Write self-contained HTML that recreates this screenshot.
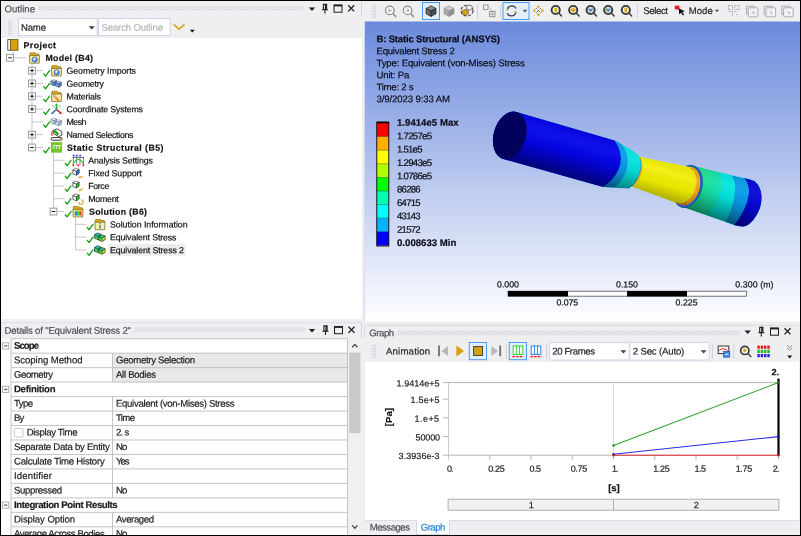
<!DOCTYPE html>
<html lang="en"><head><meta charset="utf-8"><title>Mechanical - Equivalent Stress 2</title>
<style>
html,body{margin:0;padding:0;background:#000;}
#app{position:relative;width:801px;height:536px;overflow:hidden;background:#efeff2;font-family:"Liberation Sans",sans-serif;}
#app div{position:absolute;box-sizing:border-box;}
#app{filter:blur(0.3px);}
#gfx{position:absolute;left:0;top:0;}
.t{position:absolute;white-space:nowrap;line-height:1;-webkit-text-stroke:0.18px currentColor;}
</style></head><body>
<div id="app">
<div style="left:1px;top:37.8px;width:360.5px;height:281.5px;background:#fff;"></div>
<div style="left:1px;top:338.7px;width:347px;height:197px;background:#fff;"></div>
<div style="left:365px;top:362.3px;width:434px;height:158.4px;background:#fff;"></div>
<div style="left:365px;top:520.3px;width:434px;height:14.5px;background:#efeff2;border-top:1px solid #dcdce6;"></div>
<div style="left:416px;top:519.5px;width:34.2px;height:15.2px;background:#fff;border:1px solid #d6d6e2;border-top:none;"></div>
<svg id="gfx" width="801" height="536" viewBox="0 0 801 536">
<defs>
<pattern id="grip" x="0" y="0" width="3.2" height="3.2" patternUnits="userSpaceOnUse">
<rect x="0" y="0" width="1.1" height="1.1" fill="#b9b9c6"/><rect x="1.6" y="1.6" width="1.1" height="1.1" fill="#b9b9c6"/>
</pattern>
<linearGradient id="sky" x1="0" y1="0" x2="0" y2="1">
<stop offset="0" stop-color="#6b8adc"/><stop offset="1" stop-color="#ffffff"/>
</linearGradient>
</defs>
<path d="M361.5 2V16.5M361.5 323V338" stroke="#d4d4de" stroke-width="1" fill="none"/>
<path d="M1 322.6H361.5" stroke="#dfdfe8" stroke-width="1" fill="none"/>
<path d="M364.7 338V325.4H799" stroke="#d9d9e4" stroke-width="1" fill="none"/>
<g transform="translate(39 5.8)"><rect x="0" y="0" width="265" height="4.4" fill="url(#grip)"/></g>
<path d="M308.8 7.6000000000000005h6.4l-3.2 3.4z" fill="#1e1e1e"/>
<path d="M323.4 4.4h3.2v5.2h-3.2zM322 9.8h6M325 9.8v3.6" fill="none" stroke="#1e1e1e" stroke-width="1.1"/><path d="M325.6 4.4v5.2" stroke="#1e1e1e" stroke-width="1.4"/>
<rect x="334" y="5.0" width="8" height="7.2" fill="none" stroke="#1e1e1e" stroke-width="1"/><path d="M334 5.6000000000000005h8" stroke="#1e1e1e" stroke-width="1.6"/>
<path d="M348.2 5.2l6 6.2M354.2 5.2l-6 6.2" stroke="#1e1e1e" stroke-width="1.3" fill="none"/>
<g transform="translate(7.9 20.3)"><rect x="0" y="0" width="4.4" height="14.6" fill="url(#grip)"/></g>
<rect x="18.5" y="18.5" width="78.5" height="17" fill="#fff" stroke="#d3d5e6" stroke-width="1" />
<path d="M88.6 26.2h6.2l-3.1 3.3z" fill="#444"/>
<rect x="98.5" y="18.5" width="71.5" height="17" fill="#fff" stroke="#d3d5e6" stroke-width="1" />
<path d="M174.2 24.8l4.9 4.3l4.9-4.3" fill="none" stroke="#d6a41c" stroke-width="1.7" stroke-linecap="round" stroke-linejoin="round"/>
<path d="M189.8 29.8h5l-2.5 2.8z" fill="#111"/>
<g transform="translate(135 327.6)"><rect x="0" y="0" width="170" height="4.4" fill="url(#grip)"/></g>
<path d="M308.8 329.09999999999997h6.4l-3.2 3.4z" fill="#1e1e1e"/>
<path d="M323.9 325.9h3.2v5.2h-3.2zM322.5 331.29999999999995h6M325.5 331.29999999999995v3.6" fill="none" stroke="#1e1e1e" stroke-width="1.1"/><path d="M326.1 325.9v5.2" stroke="#1e1e1e" stroke-width="1.4"/>
<rect x="334.5" y="326.5" width="8" height="7.2" fill="none" stroke="#1e1e1e" stroke-width="1"/><path d="M334.5 327.09999999999997h8" stroke="#1e1e1e" stroke-width="1.6"/>
<path d="M348.5 326.7l6 6.2M354.5 326.7l-6 6.2" stroke="#1e1e1e" stroke-width="1.3" fill="none"/>
<g transform="translate(398 330.7)"><rect x="0" y="0" width="342" height="4.4" fill="url(#grip)"/></g>
<path d="M744.5 330.59999999999997h6.4l-3.2 3.4z" fill="#1e1e1e"/>
<path d="M759.6999999999999 327.4h3.2v5.2h-3.2zM758.3 332.79999999999995h6M761.3 332.79999999999995v3.6" fill="none" stroke="#1e1e1e" stroke-width="1.1"/><path d="M761.9 327.4v5.2" stroke="#1e1e1e" stroke-width="1.4"/>
<rect x="770.5" y="328.0" width="8" height="7.2" fill="none" stroke="#1e1e1e" stroke-width="1"/><path d="M770.5 328.59999999999997h8" stroke="#1e1e1e" stroke-width="1.6"/>
<path d="M784.5 328.2l6 6.2M790.5 328.2l-6 6.2" stroke="#1e1e1e" stroke-width="1.3" fill="none"/>
<defs><linearGradient id="rb" x1="0" y1="0" x2="1" y2="1"><stop offset="0" stop-color="#2a52e8"/><stop offset="0.3" stop-color="#18c8d8"/><stop offset="0.5" stop-color="#30d030"/><stop offset="0.72" stop-color="#f0e020"/><stop offset="1" stop-color="#f03018"/></linearGradient></defs>
<rect x="108.6" y="244.16" width="77" height="11.6" fill="#ececec" />
<path d="M13 51.0V57.81M13.5 57.81H26" fill="none" stroke="#bcbcbc" stroke-width="0.85"/>
<path d="M32 63.81V147.48000000000002" fill="none" stroke="#bcbcbc" stroke-width="0.85"/>
<path d="M35.6 70.62H43" fill="none" stroke="#bcbcbc" stroke-width="0.85"/>
<path d="M35.6 83.43H43" fill="none" stroke="#bcbcbc" stroke-width="0.85"/>
<path d="M35.6 96.24000000000001H43" fill="none" stroke="#bcbcbc" stroke-width="0.85"/>
<path d="M35.6 109.05H43" fill="none" stroke="#bcbcbc" stroke-width="0.85"/>
<path d="M32 121.86H43" fill="none" stroke="#bcbcbc" stroke-width="0.85"/>
<path d="M35.6 134.67000000000002H43" fill="none" stroke="#bcbcbc" stroke-width="0.85"/>
<path d="M35.6 147.48000000000002H43" fill="none" stroke="#bcbcbc" stroke-width="0.85"/>
<path d="M53.5 153.48000000000002V211.53" fill="none" stroke="#bcbcbc" stroke-width="0.85"/>
<path d="M53.5 160.29000000000002H64.5" fill="none" stroke="#bcbcbc" stroke-width="0.85"/>
<path d="M53.5 173.1H64.5" fill="none" stroke="#bcbcbc" stroke-width="0.85"/>
<path d="M53.5 185.91H64.5" fill="none" stroke="#bcbcbc" stroke-width="0.85"/>
<path d="M53.5 198.72H64.5" fill="none" stroke="#bcbcbc" stroke-width="0.85"/>
<path d="M57.2 211.53H64.5" fill="none" stroke="#bcbcbc" stroke-width="0.85"/>
<path d="M75.6 217.53V249.96" fill="none" stroke="#bcbcbc" stroke-width="0.85"/>
<path d="M75.6 224.34H86.5" fill="none" stroke="#bcbcbc" stroke-width="0.85"/>
<path d="M75.6 237.15H86.5" fill="none" stroke="#bcbcbc" stroke-width="0.85"/>
<path d="M75.6 249.96H86.5" fill="none" stroke="#bcbcbc" stroke-width="0.85"/>
<rect x="7.8" y="39.6" width="3" height="10.6" fill="#fff" stroke="#333" stroke-width="0.8"/>
<rect x="10.6" y="39.6" width="7.4" height="10.6" fill="#d9a012" stroke="#6b5208" stroke-width="0.8"/>
<path d="M29.900000000000002 52.81h5.4l1 1.2h2.6v2.6h-9z" fill="#dba81e" stroke="#8a6a14" stroke-width="0.6"/>
<path d="M29.3 55.61h10.4l-.5 7.6h-9.4z" fill="#f4eca6" stroke="#6a5a1a" stroke-width="0.7" stroke-linejoin="round"/>
<circle cx="34.7" cy="59.61" r="2.7" fill="#5a8ee0" stroke="#2a4a96" stroke-width="0.6"/><path d="M33.1 58.410000000000004q1.4-1.6 2.8-.4q.2 1.2-1 1.6q-.2 1.4-1.4 1.2z" fill="#e4eeff"/>
<rect x="6.6" y="54.410000000000004" width="6.8" height="6.8" fill="#fff" stroke="#8e8e8e" stroke-width="0.9"/>
<path d="M8.1 57.81h3.8" stroke="#111" stroke-width="0.95"/>
<path d="M43.8 73.82000000000001l1.8 2.2l3.9-5.4" fill="none" stroke="#12a012" stroke-width="1.3" stroke-linecap="round" stroke-linejoin="round"/>
<path d="M51.9 65.62h5.4l1 1.2h2.6v2.6h-9z" fill="#dba81e" stroke="#8a6a14" stroke-width="0.6"/>
<path d="M51.3 68.42000000000002h10.4l-.5 7.6h-9.4z" fill="#f4eca6" stroke="#6a5a1a" stroke-width="0.7" stroke-linejoin="round"/>
<circle cx="56.7" cy="72.42" r="2.7" fill="#5a8ee0" stroke="#2a4a96" stroke-width="0.6"/><path d="M55.1 71.22q1.4-1.6 2.8-.4q.2 1.2-1 1.6q-.2 1.4-1.4 1.2z" fill="#e4eeff"/>
<rect x="28.6" y="67.22" width="6.8" height="6.8" fill="#fff" stroke="#8e8e8e" stroke-width="0.9"/>
<path d="M30.1 70.62h3.8" stroke="#111" stroke-width="0.95"/>
<path d="M32 68.72v3.8" stroke="#111" stroke-width="0.95"/>
<path d="M43.8 86.63000000000001l1.8 2.2l3.9-5.4" fill="none" stroke="#12a012" stroke-width="1.3" stroke-linecap="round" stroke-linejoin="round"/>
<path d="M50.9 81.23l2.6-1.5l3.2 1l-2.6 1.6z" fill="#b8d4f8" stroke="#2a3a5a" stroke-width="0.5"/><path d="M50.9 81.23l3.2 1.1v3.4l-3.2-1.2z" fill="#6aa6ec" stroke="#2a3a5a" stroke-width="0.5"/><path d="M54.1 82.33000000000001l2.6-1.6v3.3l-2.6 1.7z" fill="#4a88da" stroke="#2a3a5a" stroke-width="0.5"/>
<path d="M55.7 82.83l2.6-1.5l3.2 1l-2.6 1.6z" fill="#b8d4f8" stroke="#2a3a5a" stroke-width="0.5"/><path d="M55.7 82.83l3.2 1.1v3.4l-3.2-1.2z" fill="#6aa6ec" stroke="#2a3a5a" stroke-width="0.5"/><path d="M58.900000000000006 83.93l2.6-1.6v3.3l-2.6 1.7z" fill="#4a88da" stroke="#2a3a5a" stroke-width="0.5"/>
<rect x="28.6" y="80.03" width="6.8" height="6.8" fill="#fff" stroke="#8e8e8e" stroke-width="0.9"/>
<path d="M30.1 83.43h3.8" stroke="#111" stroke-width="0.95"/>
<path d="M32 81.53v3.8" stroke="#111" stroke-width="0.95"/>
<path d="M43.8 99.44000000000001l1.8 2.2l3.9-5.4" fill="none" stroke="#12a012" stroke-width="1.3" stroke-linecap="round" stroke-linejoin="round"/>
<path d="M51.9 91.24000000000001h5.4l1 1.2h2.6v2.6h-9z" fill="#dba81e" stroke="#8a6a14" stroke-width="0.6"/>
<path d="M51.3 94.04000000000002h10.4l-.5 7.6h-9.4z" fill="#f4eca6" stroke="#6a5a1a" stroke-width="0.7" stroke-linejoin="round"/>
<path d="M54.3 96.04l4.2 4.4" stroke="#e8873a" stroke-width="2.2" stroke-linecap="round"/><path d="M53.9 95.64000000000001l1.6 1.6" stroke="#b9b9b9" stroke-width="1.6" stroke-linecap="round"/>
<rect x="28.6" y="92.84" width="6.8" height="6.8" fill="#fff" stroke="#8e8e8e" stroke-width="0.9"/>
<path d="M30.1 96.24000000000001h3.8" stroke="#111" stroke-width="0.95"/>
<path d="M32 94.34v3.8" stroke="#111" stroke-width="0.95"/>
<path d="M43.8 112.25l1.8 2.2l3.9-5.4" fill="none" stroke="#12a012" stroke-width="1.3" stroke-linecap="round" stroke-linejoin="round"/>
<path d="M56.5 109.64999999999999v-5" stroke="#1db81d" stroke-width="1.3"/><path d="M54.8 105.64999999999999l1.7-2.4l1.7 2.4z" fill="#1db81d"/>
<path d="M56.5 109.64999999999999l4.2 3.4" stroke="#e01818" stroke-width="1.3"/><path d="M62.1 114.25l-3-.6l1.7-2.1z" fill="#e01818"/>
<path d="M56.5 109.64999999999999l-4.2 3.4" stroke="#3a7be0" stroke-width="1.3"/><path d="M50.9 114.25l3-.6l-1.7-2.1z" fill="#3a7be0"/>
<path d="M52.1 105.45l8.8 7M60.9 105.45l-8.8 7" stroke="#555" stroke-width="0.5"/>
<rect x="28.6" y="105.64999999999999" width="6.8" height="6.8" fill="#fff" stroke="#8e8e8e" stroke-width="0.9"/>
<path d="M30.1 109.05h3.8" stroke="#111" stroke-width="0.95"/>
<path d="M32 107.14999999999999v3.8" stroke="#111" stroke-width="0.95"/>
<path d="M43.8 125.06l1.8 2.2l3.9-5.4" fill="none" stroke="#12a012" stroke-width="1.3" stroke-linecap="round" stroke-linejoin="round"/>
<path d="M50.9 119.66l2.6-1.5l3.2 1l-2.6 1.6z" fill="#eef4fb" stroke="#4f6480" stroke-width="0.5"/><path d="M50.9 119.66l3.2 1.1v3.4l-3.2-1.2z" fill="#dbe7f4" stroke="#4f6480" stroke-width="0.5"/><path d="M54.1 120.76l2.6-1.6v3.3l-2.6 1.7z" fill="#b5c7dd" stroke="#4f6480" stroke-width="0.5"/>
<path d="M55.7 121.25999999999999l2.6-1.5l3.2 1l-2.6 1.6z" fill="#eef4fb" stroke="#4f6480" stroke-width="0.5"/><path d="M55.7 121.25999999999999l3.2 1.1v3.4l-3.2-1.2z" fill="#dbe7f4" stroke="#4f6480" stroke-width="0.5"/><path d="M58.900000000000006 122.36l2.6-1.6v3.3l-2.6 1.7z" fill="#b5c7dd" stroke="#4f6480" stroke-width="0.5"/>
<path d="M52.1 135.87q-1.3-3.6 1.8-5.6" fill="none" stroke="#f03434" stroke-width="1.3"/>
<path d="M53.7 130.37l3.4-1.5l4.7 2.7v3.6l-3.2 1.5l-4.9-3z" fill="#fdfdfd" stroke="#222" stroke-width="0.8"/>
<path d="M54.4 130.57000000000002l3.9 4.1" stroke="#18b018" stroke-width="2.4"/>
<rect x="51.2" y="137.57000000000002" width="10.8" height="2.6" rx="0.9" fill="#fff" stroke="#222" stroke-width="0.9"/><rect x="59.4" y="138.17000000000002" width="1.5" height="1.4" fill="#e0b020"/>
<rect x="28.6" y="131.27" width="6.8" height="6.8" fill="#fff" stroke="#8e8e8e" stroke-width="0.9"/>
<path d="M30.1 134.67000000000002h3.8" stroke="#111" stroke-width="0.95"/>
<path d="M32 132.77v3.8" stroke="#111" stroke-width="0.95"/>
<path d="M43.8 150.68l1.8 2.2l3.9-5.4" fill="none" stroke="#12a012" stroke-width="1.3" stroke-linecap="round" stroke-linejoin="round"/>
<rect x="51.0" y="142.18" width="11.1" height="10.5" fill="#78c22a"/>
<text x="56.6" y="149.18" text-anchor="middle" font-family="Liberation Sans,sans-serif" font-size="4.7" font-weight="700" font-style="italic" fill="#fff" letter-spacing="-0.2">TTT</text>
<rect x="28.6" y="144.08" width="6.8" height="6.8" fill="#fff" stroke="#8e8e8e" stroke-width="0.9"/>
<path d="M30.1 147.48000000000002h3.8" stroke="#111" stroke-width="0.95"/>
<path d="M65.30000000000001 163.49l1.8 2.2l3.9-5.4" fill="none" stroke="#12a012" stroke-width="1.3" stroke-linecap="round" stroke-linejoin="round"/>
<path d="M73.3 156.69000000000003v8M76.7 156.69000000000003v8M80.0 156.69000000000003v8M83.39999999999999 156.69000000000003v8M72.7 157.49h11.2" stroke="#333" stroke-width="0.65" fill="none"/>
<path d="M73.3 163.49q5-8 10.1 0" fill="none" stroke="#22c422" stroke-width="1.2"/>
<rect x="72.69999999999999" y="154.69000000000003" width="1.9" height="1.7" fill="#2a4be0"/>
<rect x="75.8" y="154.69000000000003" width="1.9" height="1.7" fill="#2a4be0"/>
<rect x="79.19999999999999" y="154.69000000000003" width="1.9" height="1.7" fill="#2a4be0"/>
<circle cx="73.3" cy="165.19000000000003" r="1" fill="#ee1c1c"/>
<circle cx="78.3" cy="165.19000000000003" r="1" fill="#ee1c1c"/>
<circle cx="83.39999999999999" cy="165.19000000000003" r="1" fill="#ee1c1c"/>
<path d="M65.30000000000001 176.29999999999998l1.8 2.2l3.9-5.4" fill="none" stroke="#12a012" stroke-width="1.3" stroke-linecap="round" stroke-linejoin="round"/>
<path d="M72.8 170.0l2.7-1.7l3.7 1.2l-2.7 1.8z" fill="#fafafa" stroke="#222" stroke-width="0.6"/><path d="M72.8 170.0l3.7 1.3v3.9l-3.7-1.4z" fill="#f0f0f0" stroke="#222" stroke-width="0.6"/><path d="M76.5 171.3l2.7-1.8v3.7l-2.7 2z" fill="#1e7be6" stroke="#222" stroke-width="0.6"/>
<path d="M78.2 178.1l2.4-2M80.4 178.1l2.4-2" stroke="#d6a41c" stroke-width="1.1"/>
<path d="M65.30000000000001 189.10999999999999l1.8 2.2l3.9-5.4" fill="none" stroke="#12a012" stroke-width="1.3" stroke-linecap="round" stroke-linejoin="round"/>
<path d="M72.8 182.81l2.7-1.7l3.7 1.2l-2.7 1.8z" fill="#fafafa" stroke="#222" stroke-width="0.6"/><path d="M72.8 182.81l3.7 1.3v3.9l-3.7-1.4z" fill="#f0f0f0" stroke="#222" stroke-width="0.6"/><path d="M76.5 184.11l2.7-1.8v3.7l-2.7 2z" fill="#1fd01f" stroke="#222" stroke-width="0.6"/>
<path d="M79.4 190.71l3.4-2.2" stroke="#d6a41c" stroke-width="1.1"/><path d="M78.4 191.31l2.4-.2l-1.2-1.8z" fill="#d6a41c"/>
<path d="M65.30000000000001 201.92l1.8 2.2l3.9-5.4" fill="none" stroke="#12a012" stroke-width="1.3" stroke-linecap="round" stroke-linejoin="round"/>
<path d="M72.8 195.62l2.7-1.7l3.7 1.2l-2.7 1.8z" fill="#fafafa" stroke="#222" stroke-width="0.6"/><path d="M72.8 195.62l3.7 1.3v3.9l-3.7-1.4z" fill="#f0f0f0" stroke="#222" stroke-width="0.6"/><path d="M76.5 196.92000000000002l2.7-1.8v3.7l-2.7 2z" fill="#1fd01f" stroke="#222" stroke-width="0.6"/>
<path d="M78.8 201.92a2.2 2.2 0 1 0 2.2-2.1" fill="none" stroke="#d6a41c" stroke-width="1.1"/>
<path d="M65.30000000000001 214.73l1.8 2.2l3.9-5.4" fill="none" stroke="#12a012" stroke-width="1.3" stroke-linecap="round" stroke-linejoin="round"/>
<path d="M73.39999999999999 206.53h5.4l1 1.2h2.6v2.6h-9z" fill="#dba81e" stroke="#8a6a14" stroke-width="0.6"/>
<path d="M72.8 209.33h10.4l-.5 7.6h-9.4z" fill="#f4eca6" stroke="#6a5a1a" stroke-width="0.7" stroke-linejoin="round"/>
<rect x="74.8" y="211.13" width="2.4" height="4.4" fill="#2a7be0"/><rect x="77.2" y="211.13" width="2.2" height="4.4" fill="#2ad02a"/><rect x="79.4" y="211.13" width="2.2" height="4.4" fill="#e8422a"/><path d="M74.8 211.13l1.2-1.2h6.8l-1.2 1.2z" fill="#f0d020"/>
<rect x="50.1" y="208.13" width="6.8" height="6.8" fill="#fff" stroke="#8e8e8e" stroke-width="0.9"/>
<path d="M51.6 211.53h3.8" stroke="#111" stroke-width="0.95"/>
<path d="M87.30000000000001 227.54l1.8 2.2l3.9-5.4" fill="none" stroke="#12a012" stroke-width="1.3" stroke-linecap="round" stroke-linejoin="round"/>
<path d="M95.39999999999999 219.34h5.4l1 1.2h2.6v2.6h-9z" fill="#dba81e" stroke="#8a6a14" stroke-width="0.6"/>
<path d="M94.8 222.14000000000001h10.4l-.5 7.6h-9.4z" fill="#f8f0a8" stroke="#6a5a1a" stroke-width="0.7" stroke-linejoin="round"/>
<rect x="99.4" y="225.14000000000001" width="1.3" height="3.4" fill="#2a6ad8"/><rect x="99.4" y="223.14000000000001" width="1.3" height="1.2" fill="#2a6ad8"/>
<path d="M87.30000000000001 240.35l1.8 2.2l3.9-5.4" fill="none" stroke="#12a012" stroke-width="1.3" stroke-linecap="round" stroke-linejoin="round"/>
<path d="M94.39999999999999 234.75l3-1.8l3.6 1.2v3.6l-3 1.9l-3.6-1.3z" fill="url(#rb)" stroke="#1c1c1c" stroke-width="0.6" stroke-linejoin="round"/><path d="M94.39999999999999 234.75l3.6 1.3l3-1.9M98.0 236.05v3.6" fill="none" stroke="#1c1c1c" stroke-width="0.45"/>
<path d="M98.6 236.55l3-1.8l3.6 1.2v3.6l-3 1.9l-3.6-1.3z" fill="url(#rb)" stroke="#1c1c1c" stroke-width="0.6" stroke-linejoin="round"/><path d="M98.6 236.55l3.6 1.3l3-1.9M102.2 237.85000000000002v3.6" fill="none" stroke="#1c1c1c" stroke-width="0.45"/>
<path d="M87.30000000000001 253.16l1.8 2.2l3.9-5.4" fill="none" stroke="#12a012" stroke-width="1.3" stroke-linecap="round" stroke-linejoin="round"/>
<path d="M94.39999999999999 247.56l3-1.8l3.6 1.2v3.6l-3 1.9l-3.6-1.3z" fill="url(#rb)" stroke="#1c1c1c" stroke-width="0.6" stroke-linejoin="round"/><path d="M94.39999999999999 247.56l3.6 1.3l3-1.9M98.0 248.86v3.6" fill="none" stroke="#1c1c1c" stroke-width="0.45"/>
<path d="M98.6 249.36l3-1.8l3.6 1.2v3.6l-3 1.9l-3.6-1.3z" fill="url(#rb)" stroke="#1c1c1c" stroke-width="0.6" stroke-linejoin="round"/><path d="M98.6 249.36l3.6 1.3l3-1.9M102.2 250.66000000000003v3.6" fill="none" stroke="#1c1c1c" stroke-width="0.45"/>
<g transform="translate(372 4.4)"><rect x="0" y="0" width="4.4" height="13.8" fill="url(#grip)"/></g>
<path d="M393.1 13.7l2.6 2.7" stroke="#8c8c8c" stroke-width="1.5" stroke-linecap="round"/><circle cx="389.8" cy="10.4" r="4.3" fill="#f4f4f6" stroke="#8c8c8c" stroke-width="1.2"/>
<path d="M391.6 10.4h-3.4M390.0 8.9l-1.8 1.5l1.8 1.5" fill="none" stroke="#9a9a9a" stroke-width="0.8"/>
<path d="M410.90000000000003 13.7l2.6 2.7" stroke="#8c8c8c" stroke-width="1.5" stroke-linecap="round"/><circle cx="407.6" cy="10.4" r="4.3" fill="#f4f4f6" stroke="#8c8c8c" stroke-width="1.2"/>
<path d="M405.8 10.4h3.4M407.40000000000003 8.9l1.8 1.5l-1.8 1.5" fill="none" stroke="#9a9a9a" stroke-width="0.8"/>
<rect x="422.5" y="2.5" width="17" height="17" fill="#e3eefb" stroke="#4a9cf0" stroke-width="1" />
<path d="M426 8.4l5-2.6l5 2.6l-5 2.6z" fill="#8c8c8c" stroke="#222" stroke-width="0.7"/><path d="M426 8.4l5 2.6v5.4l-5-2.6z" fill="#6a6a6a" stroke="#222" stroke-width="0.7"/><path d="M431 11.0l5-2.6v5.4l-5 2.6z" fill="#4c4c4c" stroke="#222" stroke-width="0.7"/>
<path d="M444 8.4l5-2.6l5 2.6l-5 2.6z" fill="#c8c8c8" stroke="#9a9a9a" stroke-width="0.7"/><path d="M444 8.4l5 2.6v5.4l-5-2.6z" fill="#a8a8a8" stroke="#9a9a9a" stroke-width="0.7"/><path d="M449 11.0l5-2.6v5.4l-5 2.6z" fill="#8e8e8e" stroke="#9a9a9a" stroke-width="0.7"/>
<ellipse cx="467" cy="10.6" rx="6" ry="5.4" fill="none" stroke="#444" stroke-width="1.1" stroke-dasharray="3 1.6"/>
<path d="M462 11l3-1.6l3.4 1.4v3l-3 1.6l-3.4-1.4z" fill="#d6a41c" stroke="#5a4408" stroke-width="0.6"/>
<path d="M466.6 6.4l2.6-1.4l3 1.2v2.6l-2.6 1.4l-3-1.2z" fill="#f4f4f4" stroke="#333" stroke-width="0.6"/>
<path d="M477.5 4V18.5" stroke="#d0d0da" stroke-width="1"/>
<rect x="483.6" y="5" width="4.4" height="4.4" fill="#f4f4f4" stroke="#8a8a8a" stroke-width="0.9"/><path d="M489.4 7.6l2.6 3" stroke="#9a9a9a" stroke-width="0.8"/><rect x="489.6" y="11.4" width="5.4" height="5.4" fill="#f4f4f4" stroke="#8a8a8a" stroke-width="0.9"/><path d="M489.6 14.1h5.4M492.3 11.4v5.4" stroke="#8a8a8a" stroke-width="0.7"/>
<path d="M500.8 4V18.5" stroke="#d0d0da" stroke-width="1"/>
<rect x="503" y="2.5" width="26" height="17" fill="#e3eefb" stroke="#4a9cf0" stroke-width="1" />
<path d="M507.4 9.2a4.6 4.6 0 0 1 8.6-.6" fill="none" stroke="#3a3a3a" stroke-width="1.3"/><path d="M515.8 12.6a4.6 4.6 0 0 1-8.6 .6" fill="none" stroke="#3a3a3a" stroke-width="1.3"/>
<path d="M506 10.6l2.9-.4l-1.7-2.3z" fill="#d6a41c"/><path d="M517.2 11.2l-2.9 .4l1.7 2.3z" fill="#d6a41c"/>
<path d="M522.6 9.8h4.8l-2.4 2.6z" fill="#555"/>
<path d="M544.0 10.6L541.5 12.7L541.5 8.5z" fill="#d6a41c"/>
<path d="M532.8 10.6L535.3 8.5L535.3 12.7z" fill="#d6a41c"/>
<path d="M538.4 16.2L536.3 13.7L540.5 13.7z" fill="#d6a41c"/>
<path d="M538.4 5.0L540.5 7.5L536.3 7.5z" fill="#d6a41c"/>
<rect x="535.9" y="8.1" width="5" height="5" fill="#fff"/><path d="M536 8.2l4.8 4.8M540.8 8.2l-4.8 4.8" stroke="#222" stroke-width="0.9" stroke-dasharray="1.1 0.9"/>
<path d="M559.0 13.3l2.6 2.7" stroke="#3a3a3a" stroke-width="1.5" stroke-linecap="round"/><circle cx="555.7" cy="10" r="4.1" fill="#f0f0f0" stroke="#3a3a3a" stroke-width="1.9"/>
<rect x="554.3000000000001" y="7.4" width="2.8" height="5.2" rx="1.2" fill="#e0b020"/>
<path d="M576.5 13.3l2.6 2.7" stroke="#3a3a3a" stroke-width="1.5" stroke-linecap="round"/><circle cx="573.2" cy="10" r="4.1" fill="#f0f0f0" stroke="#3a3a3a" stroke-width="1.9"/>
<path d="M570.7 10h5M573.2 7.5v5" stroke="#e0a818" stroke-width="1.9"/>
<path d="M593.9 13.3l2.6 2.7" stroke="#3a3a3a" stroke-width="1.5" stroke-linecap="round"/><circle cx="590.6" cy="10" r="4.1" fill="#cfcfcf" stroke="#3a3a3a" stroke-width="1.9"/>
<path d="M588.0 8.2l2.6 3.9l2.6-3.9l-2.6 1.3z" fill="#2f6fcf"/>
<path d="M611.5 13.3l2.6 2.7" stroke="#3a3a3a" stroke-width="1.5" stroke-linecap="round"/><circle cx="608.2" cy="10" r="4.1" fill="#cfcfcf" stroke="#3a3a3a" stroke-width="1.9"/>
<path d="M605.6 8.2l2.6 3.9v-2.6z" fill="#1aa01a"/><path d="M610.8000000000001 8.2l-2.6 3.9v-2.6z" fill="#2f6fcf"/>
<path d="M629.0999999999999 13.3l2.6 2.7" stroke="#3a3a3a" stroke-width="1.5" stroke-linecap="round"/><circle cx="625.8" cy="10" r="4.1" fill="#f0f0f0" stroke="#3a3a3a" stroke-width="1.9"/>
<rect x="624.4" y="7.4" width="2.8" height="5.2" rx="1.2" fill="#e0b020"/>
<path d="M637.4 4V18.5" stroke="#d0d0da" stroke-width="1"/>
<rect x="674.8" y="5.6" width="4.6" height="3.8" fill="#f0141e"/>
<path d="M678.6 8.2l6.4 3l-2.6 .7l1.8 2.9l-1.3 .8l-1.8-2.9l-1.9 1.9z" fill="#111"/>
<path d="M714.8 9.8h4.4l-2.2 2.4z" fill="#555"/>
<path d="M728.5 5.5h4v4h-4zM734.5 5.5h4.5v4h-4.5zM728.5 11.5h4v4.5M734.5 11.5h3M736 14l2.6 2.4" fill="none" stroke="#a4a4ac" stroke-width="0.9" stroke-dasharray="1.6 0.8"/>
<path d="M746.5 6.2h8.4v2.4" fill="none" stroke="#a4a4ac" stroke-width="0.9"/><rect x="748.3" y="7.8" width="9.6" height="9" rx="1" fill="#f2f2f6" stroke="#a4a4ac" stroke-width="0.9"/><path d="M746.5 6.2v8h1.8" fill="none" stroke="#a4a4ac" stroke-width="0.9"/><path d="M751.9 11.4l2.4 1.2l-1 .4l.8 1.4" fill="none" stroke="#a4a4ac" stroke-width="0.8"/>
<path d="M764.2 6.2h8.4v2.4" fill="none" stroke="#a4a4ac" stroke-width="0.9"/><rect x="766.0" y="7.8" width="9.6" height="9" rx="1" fill="#f2f2f6" stroke="#a4a4ac" stroke-width="0.9"/><path d="M764.2 6.2v8h1.8" fill="none" stroke="#a4a4ac" stroke-width="0.9"/><path d="M769.6 11.4l2.4 1.2l-1 .4l.8 1.4" fill="none" stroke="#a4a4ac" stroke-width="0.8"/>
<path d="M781.8 6.2h8.4v2.4" fill="none" stroke="#a4a4ac" stroke-width="0.9"/><rect x="783.5999999999999" y="7.8" width="9.6" height="9" rx="1" fill="#f2f2f6" stroke="#a4a4ac" stroke-width="0.9"/><path d="M781.8 6.2v8h1.8" fill="none" stroke="#a4a4ac" stroke-width="0.9"/><path d="M787.1999999999999 11.4l2.4 1.2l-1 .4l.8 1.4" fill="none" stroke="#a4a4ac" stroke-width="0.8"/>
<rect x="364.8" y="21.5" width="435.2" height="300.1" fill="url(#sky)" />
<path d="M364.40000000000003 21.5V321.6" stroke="#cfd4ea" stroke-width="0.8"/>
<rect x="376.8" y="123.0" width="12" height="13.799999999999999" fill="#ff0000" />
<rect x="376.8" y="136.6" width="12" height="13.799999999999999" fill="#ffb000" />
<rect x="376.8" y="150.2" width="12" height="13.799999999999999" fill="#ffff00" />
<rect x="376.8" y="163.8" width="12" height="13.799999999999999" fill="#b2ff00" />
<rect x="376.8" y="177.4" width="12" height="13.799999999999999" fill="#00ff00" />
<rect x="376.8" y="191.0" width="12" height="13.799999999999999" fill="#00ffb2" />
<rect x="376.8" y="204.6" width="12" height="13.799999999999999" fill="#00ffff" />
<rect x="376.8" y="218.2" width="12" height="13.799999999999999" fill="#00b2ff" />
<rect x="376.8" y="231.8" width="12" height="13.799999999999999" fill="#0000ff" />
<rect x="376.8" y="122.4" width="12" height="123.6" fill="none" stroke="#000" stroke-width="0.9"/>
<path d="M376.8 122.4h12" stroke="#000" stroke-width="1.8"/>
<path d="M376.8 136.6h12" stroke="#222" stroke-width="0.5" opacity="0.7"/>
<path d="M376.8 150.2h12" stroke="#222" stroke-width="0.5" opacity="0.7"/>
<path d="M376.8 163.8h12" stroke="#222" stroke-width="0.5" opacity="0.7"/>
<path d="M376.8 177.4h12" stroke="#222" stroke-width="0.5" opacity="0.7"/>
<path d="M376.8 191.0h12" stroke="#222" stroke-width="0.5" opacity="0.7"/>
<path d="M376.8 204.6h12" stroke="#222" stroke-width="0.5" opacity="0.7"/>
<path d="M376.8 218.2h12" stroke="#222" stroke-width="0.5" opacity="0.7"/>
<path d="M376.8 231.8h12" stroke="#222" stroke-width="0.5" opacity="0.7"/>
<rect x="508" y="291.2" width="238.6" height="5" fill="#fff" stroke="#555" stroke-width="0.8" />
<rect x="508" y="291" width="60" height="5.4" fill="#000" />
<rect x="627" y="291" width="60" height="5.4" fill="#000" />
<defs><linearGradient id="shade" gradientUnits="userSpaceOnUse" x1="516.5" y1="111.9" x2="503.1" y2="158.9"><stop offset="0" stop-color="#000" stop-opacity="0.07"/><stop offset="0.25" stop-color="#fff" stop-opacity="0.05"/><stop offset="0.5" stop-color="#000" stop-opacity="0.05"/><stop offset="0.8" stop-color="#000" stop-opacity="0.3"/><stop offset="1" stop-color="#000" stop-opacity="0.5"/></linearGradient></defs>
<defs><linearGradient id="shadeY" gradientUnits="userSpaceOnUse" x1="515.3" y1="116.2" x2="504.3" y2="154.6"><stop offset="0" stop-color="#000" stop-opacity="0.05"/><stop offset="0.3" stop-color="#fff" stop-opacity="0.1"/><stop offset="0.6" stop-color="#000" stop-opacity="0.04"/><stop offset="1" stop-color="#000" stop-opacity="0.3"/></linearGradient></defs>
<clipPath id="clipR"><path d="M690.4 165 L740.3 177.4 Q750 178.8 754.6 181.3 Q760.4 186 761.4 195 Q761.8 203 759.9 208.1 Q757.6 215 753.3 219.9 Q748 226 742.9 226.4 Q738 226.4 735 225.3 L685.4 207.9 A14.3 21.6 16.0 0 1 690.4 165Z"/></clipPath>
<g clip-path="url(#clipR)">
<path d="M690.4 165 L740.3 177.4 Q750 178.8 754.6 181.3 Q760.4 186 761.4 195 Q761.8 203 759.9 208.1 Q757.6 215 753.3 219.9 Q748 226 742.9 226.4 Q738 226.4 735 225.3 L685.4 207.9 A14.3 21.6 16.0 0 1 690.4 165Z" fill="#1fdc86"/>
<defs><linearGradient id="gr1" gradientUnits="userSpaceOnUse" x1="692.4" y1="187.8" x2="723.2" y2="196.6"><stop offset="0" stop-color="#22dd7e"/><stop offset="0.55" stop-color="#16e0a4"/><stop offset="1" stop-color="#0fe4c8"/></linearGradient></defs>
<path d="M690.4 165 L740.3 177.4 Q750 178.8 754.6 181.3 Q760.4 186 761.4 195 Q761.8 203 759.9 208.1 Q757.6 215 753.3 219.9 Q748 226 742.9 226.4 Q738 226.4 735 225.3 L685.4 207.9 A14.3 21.6 16.0 0 1 690.4 165Z" fill="url(#gr1)"/>
<path d="M717.4 168 Q723.5 181 721.3 191.1 Q720.5 198 718 202.9 Q714 209 707 214 L760 240 L780 170 Z" fill="#04e6e0"/>
<path d="M729.2 170 Q736.6 182 734.8 192.4 Q733.6 209 723 226 L760 240 L780 170 Z" fill="#0a9cea"/>
<path d="M740.3 173 Q750.4 183 748.8 193.7 Q746.8 211 731.5 228 L760 240 L780 170 Z" fill="#0606d8"/>
<path d="M690.4 165 L740.3 177.4 Q750 178.8 754.6 181.3 Q760.4 186 761.4 195 Q761.8 203 759.9 208.1 Q757.6 215 753.3 219.9 Q748 226 742.9 226.4 Q738 226.4 735 225.3 L685.4 207.9 A14.3 21.6 16.0 0 1 690.4 165Z" fill="url(#shade)"/>
</g>
<ellipse cx="687.6" cy="186.4" rx="14.3" ry="21.6" transform="rotate(16.0 687.6 186.4)" fill="#1d5fc0" stroke="#1a4aa0" stroke-width="0.6"/>
<clipPath id="clipN"><path d="M629.2 154.4 L693.0 167.6 A12.9 19.6 16.0 0 1 682.2 205.2 L621.1 182.5Z"/></clipPath>
<g clip-path="url(#clipN)"><path d="M629.2 154.4 L693.0 167.6 A12.9 19.6 16.0 0 1 682.2 205.2 L621.1 182.5Z" fill="#f2f000"/>
<path d="M688.6 166.3 A12.9 19.6 16.0 0 1 677.8 204.0" fill="none" stroke="#f3d010" stroke-width="2.6" opacity="0.8"/>
<path d="M691.3 167.1 A12.9 19.6 16.0 0 1 680.5 204.7" fill="none" stroke="#f59c12" stroke-width="3.8" opacity="0.95"/>
<path d="M686.8 203.8 A12.9 19.6 16.0 0 1 676.7 202.6" fill="none" stroke="#ee5a14" stroke-width="1.6" opacity="0.8"/>
<path d="M635.5 155.4 A10.2 15.4 16.0 0 1 627.1 185.0" fill="none" stroke="#f5a818" stroke-width="2.2" opacity="0.8"/>
<path d="M629.2 154.4 L693.0 167.6 A12.9 19.6 16.0 0 1 682.2 205.2 L621.1 182.5Z" fill="url(#shadeY)"/></g>
<clipPath id="clipL"><path d="M516.5 111.9 L615.4 140.7 L634.4 151.5 Q638.5 154.4 640.2 158.2 Q642.4 165.1 640.2 171.8 Q637.6 180.4 633.3 185.0 Q629.8 188.5 625.7 188.4 L603.2 187.1 L503.1 158.9 A16.1 24.4 16.0 0 1 516.5 111.9Z"/></clipPath>
<g clip-path="url(#clipL)"><path d="M516.5 111.9 L615.4 140.7 L634.4 151.5 Q638.5 154.4 640.2 158.2 Q642.4 165.1 640.2 171.8 Q637.6 180.4 633.3 185.0 Q629.8 188.5 625.7 188.4 L603.2 187.1 L503.1 158.9 A16.1 24.4 16.0 0 1 516.5 111.9Z" fill="#06e2de"/>
<path d="M640.3 156.8 Q642.6 165.2 640.4 171.8 Q637.7 180.4 633.5 185.0 Q630.3 188.3 626.6 188.7" fill="none" stroke="#1b56c4" stroke-width="1.2"/>
<path d="M489.2 98.3 L623.3 136.7 L621.3 143.7 Q626.5 151.2 627.3 156.1 Q628.5 166.3 625.2 173.0 Q622.1 181.1 614.8 187.4 L610.2 195.4 L472.7 156.0Z" fill="#0a9cea"/>
<path d="M489.2 98.3 L616.6 134.8 L614.8 141.1 Q620.2 149.4 620.7 156.0 Q621.6 164.3 618.0 170.5 Q613.3 180.7 603.0 186.8 L599.6 192.4 L472.7 156.0Z" fill="#0404ea"/>
<path d="M516.5 111.9 L615.4 140.7 L634.4 151.5 Q638.5 154.4 640.2 158.2 Q642.4 165.1 640.2 171.8 Q637.6 180.4 633.3 185.0 Q629.8 188.5 625.7 188.4 L603.2 187.1 L503.1 158.9 A16.1 24.4 16.0 0 1 516.5 111.9Z" fill="url(#shade)"/></g>
<ellipse cx="509.8" cy="135.4" rx="16.1" ry="24.4" transform="rotate(16.0 509.8 135.4)" fill="#02025c"/>
<rect x="2.6" y="342.83" width="6.2" height="6.2" fill="#fff" stroke="#9a9a9a" stroke-width="0.8"/><path d="M4.1 345.94h3.2" stroke="#333" stroke-width="1"/>
<rect x="112.5" y="353.17" width="235.0" height="14.47" fill="#e9e8e6" />
<path d="M112.5 353.17v14.47" stroke="#bdbdbd" stroke-width="0.9"/>
<rect x="112.5" y="367.64" width="235.0" height="14.47" fill="#e9e8e6" />
<path d="M112.5 367.64v14.47" stroke="#bdbdbd" stroke-width="0.9"/>
<rect x="2.6" y="386.25" width="6.2" height="6.2" fill="#fff" stroke="#9a9a9a" stroke-width="0.8"/><path d="M4.1 389.35h3.2" stroke="#333" stroke-width="1"/>
<path d="M112.5 396.58v14.47" stroke="#bdbdbd" stroke-width="0.9"/>
<path d="M112.5 411.05v14.47" stroke="#bdbdbd" stroke-width="0.9"/>
<rect x="14.4" y="428.45" width="8.6" height="8.6" rx="0.8" fill="#fff" stroke="#c4c4c4" stroke-width="0.9"/>
<path d="M112.5 425.52v14.47" stroke="#bdbdbd" stroke-width="0.9"/>
<path d="M112.5 439.99v14.47" stroke="#bdbdbd" stroke-width="0.9"/>
<path d="M112.5 454.46v14.47" stroke="#bdbdbd" stroke-width="0.9"/>
<path d="M112.5 468.93v14.47" stroke="#bdbdbd" stroke-width="0.9"/>
<path d="M112.5 483.40v14.47" stroke="#bdbdbd" stroke-width="0.9"/>
<rect x="2.6" y="502.00" width="6.2" height="6.2" fill="#fff" stroke="#9a9a9a" stroke-width="0.8"/><path d="M4.1 505.11h3.2" stroke="#333" stroke-width="1"/>
<path d="M112.5 512.34v14.47" stroke="#bdbdbd" stroke-width="0.9"/>
<path d="M112.5 526.81v14.47" stroke="#bdbdbd" stroke-width="0.9"/>
<path d="M11 338.70H347.5" stroke="#bdbdbd" stroke-width="0.9"/>
<path d="M11 353.17H347.5" stroke="#bdbdbd" stroke-width="0.9"/>
<path d="M11 367.64H347.5" stroke="#bdbdbd" stroke-width="0.9"/>
<path d="M11 382.11H347.5" stroke="#bdbdbd" stroke-width="0.9"/>
<path d="M11 396.58H347.5" stroke="#bdbdbd" stroke-width="0.9"/>
<path d="M11 411.05H347.5" stroke="#bdbdbd" stroke-width="0.9"/>
<path d="M11 425.52H347.5" stroke="#bdbdbd" stroke-width="0.9"/>
<path d="M11 439.99H347.5" stroke="#bdbdbd" stroke-width="0.9"/>
<path d="M11 454.46H347.5" stroke="#bdbdbd" stroke-width="0.9"/>
<path d="M11 468.93H347.5" stroke="#bdbdbd" stroke-width="0.9"/>
<path d="M11 483.40H347.5" stroke="#bdbdbd" stroke-width="0.9"/>
<path d="M11 497.87H347.5" stroke="#bdbdbd" stroke-width="0.9"/>
<path d="M11 512.34H347.5" stroke="#bdbdbd" stroke-width="0.9"/>
<path d="M11 526.81H347.5" stroke="#bdbdbd" stroke-width="0.9"/>
<path d="M11 541.28H347.5" stroke="#bdbdbd" stroke-width="0.9"/>
<path d="M11 338.7V536M347.5 338.7V536" stroke="#bdbdbd" stroke-width="0.9"/>
<rect x="348.2" y="338.7" width="12.6" height="197" fill="#f0f0f0" />
<rect x="349.2" y="352.6" width="11.2" height="80.6" fill="#c9c9c9" />
<path d="M352.2 347.2l2.6-2.8l2.6 2.8" fill="none" stroke="#444" stroke-width="1.3"/>
<path d="M352.2 525.4l2.6 2.8l2.6-2.8" fill="none" stroke="#444" stroke-width="1.3"/>
<g transform="translate(372 344.6)"><rect x="0" y="0" width="4.4" height="14" fill="url(#grip)"/></g>
<path d="M439 345.6v10.6" stroke="#6e6e6e" stroke-width="1.8"/><path d="M448 346l-6.6 5l6.6 5z" fill="#b8b8b8"/>
<path d="M456.4 345.6l7.6 5.4l-7.6 5.4z" fill="#d39e12"/>
<rect x="469.3" y="342.5" width="17.2" height="17.2" fill="#e3eefb" stroke="#4a9cf0" stroke-width="1" />
<rect x="473.6" y="346.5" width="9" height="9" fill="#d39e12" stroke="#3a3a3a" stroke-width="0.9" />
<path d="M491.4 346l6.6 5l-6.6 5z" fill="#b8b8b8"/><path d="M500.2 345.6v10.6" stroke="#6e6e6e" stroke-width="1.8"/>
<path d="M506.5 344V359" stroke="#d0d0da" stroke-width="1"/>
<rect x="509.3" y="342.5" width="17.2" height="17.2" fill="#e3eefb" stroke="#4a9cf0" stroke-width="1" />
<rect x="513.2" y="346" width="9.6" height="8.4" fill="#fff" stroke="#2fd22f" stroke-width="1"/><path d="M516.4000000000001 346v8.4M519.6 346v8.4" stroke="#2fd22f" stroke-width="1"/><path d="M512.4000000000001 356.6h11.2" stroke="#e81818" stroke-width="1.4" stroke-dasharray="2.6 1"/>
<rect x="531.2" y="346" width="9.6" height="8.4" fill="#fff" stroke="#2f86e6" stroke-width="1"/><path d="M534.4000000000001 346v8.4M537.6 346v8.4" stroke="#2f86e6" stroke-width="1"/><path d="M530.4000000000001 356.6h11.2" stroke="#e81818" stroke-width="1.4" stroke-dasharray="2.6 1"/>
<path d="M546.6 344V359" stroke="#d0d0da" stroke-width="1"/>
<rect x="549.6" y="342.6" width="79.6" height="17.4" fill="#fff" stroke="#d3d5e6" stroke-width="1" />
<path d="M620.4 350.2h6l-3 3.2z" fill="#444"/>
<rect x="629.8" y="342.6" width="79.4" height="17.4" fill="#fff" stroke="#d3d5e6" stroke-width="1" />
<path d="M700.6 350.2h6l-3 3.2z" fill="#444"/>
<path d="M712.4 344V359" stroke="#d0d0da" stroke-width="1"/>
<rect x="718.2" y="346" width="10.6" height="7.6" fill="#f4f4f4" stroke="#444" stroke-width="1.1"/><path d="M719.4 350.4q3-3.4 8 .2" fill="none" stroke="#e03030" stroke-width="1.1"/><rect x="723.6" y="351.4" width="6.2" height="5.8" fill="#3d8de6" stroke="#1d4e96" stroke-width="0.6"/><path d="M725 354.4h3.4" stroke="#fff" stroke-width="0.9"/>
<path d="M733.7 344V359" stroke="#d0d0da" stroke-width="1"/>
<path d="M748 353.6l2.8 2.9" stroke="#3c3c3c" stroke-width="1.5" stroke-linecap="round"/><circle cx="744.8" cy="350.4" r="4.1" fill="#f6f2e4" stroke="#3c3c3c" stroke-width="1.7"/><path d="M743.5 348.1l3.5 2.3l-3.5 2.3z" fill="#d39e12"/>
<rect x="757.4" y="345.6" width="2.4" height="3.2" fill="#e81818"/>
<rect x="760.7" y="345.6" width="2.4" height="3.2" fill="#e81818"/>
<rect x="764.0" y="345.6" width="2.4" height="3.2" fill="#e81818"/>
<rect x="767.3" y="345.6" width="2.4" height="3.2" fill="#e81818"/>
<rect x="757.4" y="349.8" width="2.4" height="3.2" fill="#22b422"/>
<rect x="760.7" y="349.8" width="2.4" height="3.2" fill="#22b422"/>
<rect x="764.0" y="349.8" width="2.4" height="3.2" fill="#22b422"/>
<rect x="767.3" y="349.8" width="2.4" height="3.2" fill="#22b422"/>
<rect x="757.4" y="354.0" width="2.4" height="3.2" fill="#2222e0"/>
<rect x="760.7" y="354.0" width="2.4" height="3.2" fill="#2222e0"/>
<rect x="764.0" y="354.0" width="2.4" height="3.2" fill="#2222e0"/>
<rect x="767.3" y="354.0" width="2.4" height="3.2" fill="#2222e0"/>
<path d="M787 345.4l2.6 2l2.6-2M787 348l2.6 2l2.6-2" fill="none" stroke="#777" stroke-width="0.8"/><path d="M787.2 355.6h5l-2.5 2.8z" fill="#111"/>
<path d="M443.1 382.6H778.5" stroke="#b4b4b4" stroke-width="1"/>
<path d="M448.5 382.6V459.7" stroke="#cbcbcb" stroke-width="1"/>
<path d="M443.1 455.2H778.5" stroke="#b4b4b4" stroke-width="1"/>
<path d="M613.5 382.6V455.2" stroke="#dcdcdc" stroke-width="1"/>
<path d="M443.1 399.1H448.5" stroke="#b4b4b4" stroke-width="1"/>
<path d="M443.1 417.8H448.5" stroke="#b4b4b4" stroke-width="1"/>
<path d="M443.1 436.5H448.5" stroke="#b4b4b4" stroke-width="1"/>
<path d="M489.8 455.2v4.5" stroke="#b4b4b4" stroke-width="1"/>
<path d="M531.0 455.2v4.5" stroke="#b4b4b4" stroke-width="1"/>
<path d="M572.2 455.2v4.5" stroke="#b4b4b4" stroke-width="1"/>
<path d="M613.5 455.2v4.5" stroke="#b4b4b4" stroke-width="1"/>
<path d="M654.8 455.2v4.5" stroke="#b4b4b4" stroke-width="1"/>
<path d="M696.0 455.2v4.5" stroke="#b4b4b4" stroke-width="1"/>
<path d="M737.2 455.2v4.5" stroke="#b4b4b4" stroke-width="1"/>
<path d="M778.5 455.2v4.5" stroke="#b4b4b4" stroke-width="1"/>
<path d="M613.5 445.5L778.5 382.6" stroke="#2ca02c" stroke-width="1.1"/>
<path d="M613.5 454.3L778.5 436.6" stroke="#2a2ae6" stroke-width="1.1"/>
<path d="M613.5 455.2L778.5 455.2" stroke="#e03030" stroke-width="1.1"/>
<path d="M778.5 378.6V455.8" stroke="#000" stroke-width="2.2"/>
<rect x="612.4" y="444.4" width="2.2" height="2.2" fill="#1a8a1a"/>
<rect x="777.4" y="381.5" width="2.2" height="2.2" fill="#1a8a1a"/>
<rect x="612.4" y="453.2" width="2.2" height="2.2" fill="#1a1ad0"/>
<rect x="777.4" y="435.5" width="2.2" height="2.2" fill="#1a1ad0"/>
<rect x="612.4" y="454.1" width="2.2" height="2.2" fill="#d01a1a"/>
<rect x="777.4" y="454.1" width="2.2" height="2.2" fill="#d01a1a"/>
<rect x="448.1" y="499.2" width="330.8" height="11" fill="#f1f1f1" stroke="#a8a8a8" stroke-width="0.9" />
<path d="M613.5 499.2v11" stroke="#a8a8a8" stroke-width="0.9"/>
</svg>
<span class="t " id="t0" style="font-size:9.6px;color:#4c4c56;top:4px;letter-spacing:0.015px;left:4px;transform:translate(0.50px,0.20px) rotate(0.03deg);transform-origin:0 8px;">Outline</span>
<span class="t " id="t1" style="font-size:9.6px;color:#1e1e1e;top:22px;letter-spacing:-0.200px;left:21px;transform:translate(0.00px,0.80px) rotate(0.03deg);transform-origin:0 8px;">Name</span>
<span class="t " id="t2" style="font-size:9.6px;color:#b4b4b8;top:22px;letter-spacing:-0.152px;left:101px;transform:translate(0.50px,0.80px) rotate(0.03deg);transform-origin:0 8px;">Search Outline</span>
<span class="t " id="t3" style="font-size:9.6px;color:#4c4c56;top:325px;letter-spacing:-0.182px;left:4px;transform:translate(0.50px,0.80px) rotate(0.03deg);transform-origin:0 8px;">Details of "Equivalent Stress 2"</span>
<span class="t " id="t4" style="font-size:9.6px;color:#4c4c56;top:328px;letter-spacing:-0.419px;left:369px;transform:translate(0.20px,0.20px) rotate(0.03deg);transform-origin:0 8px;">Graph</span>
<span class="t " id="t5" style="font-size:9.6px;color:#4c4c56;top:522px;letter-spacing:-0.506px;left:369px;transform:translate(0.75px,0.60px) rotate(0.03deg);transform-origin:0 8px;">Messages</span>
<span class="t " id="t6" style="font-size:9.6px;color:#1f7fd1;top:522px;letter-spacing:-0.494px;left:420px;transform:translate(0.70px,0.60px) rotate(0.03deg);transform-origin:0 8px;">Graph</span>
<span class="t " id="t7" style="font-size:8.8px;color:#111;top:41px;font-weight:700;letter-spacing:0.445px;left:23px;transform:translate(0.50px,0.20px) rotate(0.03deg);transform-origin:0 7px;">Project</span>
<span class="t " id="t8" style="font-size:8.8px;color:#111;top:54px;font-weight:700;letter-spacing:0.281px;left:45px;transform:translate(0.50px,0.01px) rotate(0.03deg);transform-origin:0 7px;">Model (B4)</span>
<span class="t " id="t9" style="font-size:8.8px;color:#111;top:66px;letter-spacing:-0.061px;left:66px;transform:translate(0.50px,0.82px) rotate(0.03deg);transform-origin:0 7px;">Geometry Imports</span>
<span class="t " id="t10" style="font-size:8.8px;color:#111;top:79px;letter-spacing:-0.161px;left:66px;transform:translate(0.50px,0.63px) rotate(0.03deg);transform-origin:0 7px;">Geometry</span>
<span class="t " id="t11" style="font-size:8.8px;color:#111;top:92px;letter-spacing:-0.149px;left:66px;transform:translate(0.50px,0.44px) rotate(0.03deg);transform-origin:0 7px;">Materials</span>
<span class="t " id="t12" style="font-size:8.8px;color:#111;top:105px;letter-spacing:-0.160px;left:66px;transform:translate(0.50px,0.25px) rotate(0.03deg);transform-origin:0 7px;">Coordinate Systems</span>
<span class="t " id="t13" style="font-size:8.8px;color:#111;top:118px;letter-spacing:-0.507px;left:66px;transform:translate(0.50px,0.06px) rotate(0.03deg);transform-origin:0 7px;">Mesh</span>
<span class="t " id="t14" style="font-size:8.8px;color:#111;top:130px;letter-spacing:-0.293px;left:66px;transform:translate(0.50px,0.87px) rotate(0.03deg);transform-origin:0 7px;">Named Selections</span>
<span class="t " id="t15" style="font-size:8.8px;color:#111;top:143px;font-weight:700;letter-spacing:0.428px;left:67px;transform:translate(0.00px,0.68px) rotate(0.03deg);transform-origin:0 7px;">Static Structural (B5)</span>
<span class="t " id="t16" style="font-size:8.8px;color:#111;top:156px;letter-spacing:-0.157px;left:88px;transform:translate(0.30px,0.49px) rotate(0.03deg);transform-origin:0 7px;">Analysis Settings</span>
<span class="t " id="t17" style="font-size:8.8px;color:#111;top:169px;letter-spacing:-0.107px;left:88px;transform:translate(0.30px,0.30px) rotate(0.03deg);transform-origin:0 7px;">Fixed Support</span>
<span class="t " id="t18" style="font-size:8.8px;color:#111;top:182px;letter-spacing:-0.376px;left:88px;transform:translate(0.30px,0.11px) rotate(0.03deg);transform-origin:0 7px;">Force</span>
<span class="t " id="t19" style="font-size:8.8px;color:#111;top:194px;letter-spacing:-0.257px;left:88px;transform:translate(0.30px,0.92px) rotate(0.03deg);transform-origin:0 7px;">Moment</span>
<span class="t " id="t20" style="font-size:8.8px;color:#111;top:207px;font-weight:700;letter-spacing:0.272px;left:89px;transform:translate(0.00px,0.73px) rotate(0.03deg);transform-origin:0 7px;">Solution (B6)</span>
<span class="t " id="t21" style="font-size:8.8px;color:#111;top:220px;letter-spacing:-0.034px;left:110px;transform:translate(0.00px,0.54px) rotate(0.03deg);transform-origin:0 7px;">Solution Information</span>
<span class="t " id="t22" style="font-size:8.8px;color:#111;top:233px;letter-spacing:-0.123px;left:110px;transform:translate(0.00px,0.35px) rotate(0.03deg);transform-origin:0 7px;">Equivalent Stress</span>
<span class="t " id="t23" style="font-size:8.8px;color:#111;top:246px;letter-spacing:-0.100px;left:110px;transform:translate(0.00px,0.16px) rotate(0.03deg);transform-origin:0 7px;">Equivalent Stress 2</span>
<span class="t " id="t24" style="font-size:9.6px;color:#1e1e1e;top:6px;letter-spacing:-0.375px;left:643px;transform:translate(0.20px,0.00px) rotate(0.03deg);transform-origin:0 8px;">Select</span>
<span class="t " id="t25" style="font-size:9.6px;color:#1e1e1e;top:6px;letter-spacing:0.032px;left:688px;transform:translate(0.70px,0.00px) rotate(0.03deg);transform-origin:0 8px;">Mode</span>
<span class="t " id="t26" style="font-size:9.6px;color:#0a0a14;top:34px;font-weight:700;letter-spacing:-0.204px;left:376px;transform:translate(0.50px,0.30px) rotate(0.03deg);transform-origin:0 8px;">B: Static Structural (ANSYS)</span>
<span class="t " id="t27" style="font-size:9.6px;color:#0a0a14;top:46px;letter-spacing:-0.243px;left:376px;transform:translate(0.50px,0.30px) rotate(0.03deg);transform-origin:0 8px;">Equivalent Stress 2</span>
<span class="t " id="t28" style="font-size:9.6px;color:#0a0a14;top:58px;letter-spacing:-0.155px;left:376px;transform:translate(0.50px,0.30px) rotate(0.03deg);transform-origin:0 8px;">Type: Equivalent (von-Mises) Stress</span>
<span class="t " id="t29" style="font-size:9.6px;color:#0a0a14;top:70px;letter-spacing:-0.178px;left:376px;transform:translate(0.50px,0.30px) rotate(0.03deg);transform-origin:0 8px;">Unit: Pa</span>
<span class="t " id="t30" style="font-size:9.6px;color:#0a0a14;top:82px;letter-spacing:-0.262px;left:376px;transform:translate(0.50px,0.30px) rotate(0.03deg);transform-origin:0 8px;">Time: 2 s</span>
<span class="t " id="t31" style="font-size:9.6px;color:#0a0a14;top:94px;letter-spacing:-0.115px;left:376px;transform:translate(0.50px,0.30px) rotate(0.03deg);transform-origin:0 8px;">3/9/2023 9:33 AM</span>
<span class="t " id="t32" style="font-size:9.6px;color:#0a0a14;top:117px;font-weight:700;letter-spacing:0.023px;left:397px;transform:translate(0.00px,0.80px) rotate(0.03deg);transform-origin:0 8px;">1.9414e5 Max</span>
<span class="t " id="t33" style="font-size:9.6px;color:#0a0a14;top:131px;letter-spacing:-0.717px;left:397px;transform:translate(0.00px,0.16px) rotate(0.03deg);transform-origin:0 8px;">1.7257e5</span>
<span class="t " id="t34" style="font-size:9.6px;color:#0a0a14;top:144px;letter-spacing:-0.770px;left:397px;transform:translate(0.00px,0.52px) rotate(0.03deg);transform-origin:0 8px;">1.51e5</span>
<span class="t " id="t35" style="font-size:9.6px;color:#0a0a14;top:157px;letter-spacing:-0.717px;left:397px;transform:translate(0.00px,0.88px) rotate(0.03deg);transform-origin:0 8px;">1.2943e5</span>
<span class="t " id="t36" style="font-size:9.6px;color:#0a0a14;top:171px;letter-spacing:-0.717px;left:397px;transform:translate(0.00px,0.24px) rotate(0.03deg);transform-origin:0 8px;">1.0786e5</span>
<span class="t " id="t37" style="font-size:9.6px;color:#0a0a14;top:184px;letter-spacing:-0.773px;left:397px;transform:translate(0.00px,0.60px) rotate(0.03deg);transform-origin:0 8px;">86286</span>
<span class="t " id="t38" style="font-size:9.6px;color:#0a0a14;top:197px;letter-spacing:-0.773px;left:397px;transform:translate(0.00px,0.96px) rotate(0.03deg);transform-origin:0 8px;">64715</span>
<span class="t " id="t39" style="font-size:9.6px;color:#0a0a14;top:211px;letter-spacing:-0.773px;left:397px;transform:translate(0.00px,0.32px) rotate(0.03deg);transform-origin:0 8px;">43143</span>
<span class="t " id="t40" style="font-size:9.6px;color:#0a0a14;top:224px;letter-spacing:-0.773px;left:397px;transform:translate(0.00px,0.68px) rotate(0.03deg);transform-origin:0 8px;">21572</span>
<span class="t " id="t41" style="font-size:9.6px;color:#0a0a14;top:238px;font-weight:700;letter-spacing:0.017px;left:397px;transform:translate(0.00px,0.04px) rotate(0.03deg);transform-origin:0 8px;">0.008633 Min</span>
<span class="t " id="t42" style="font-size:8.8px;color:#0a0a14;top:280px;letter-spacing:-0.005px;left:497px;transform:translate(0.00px,0.50px) rotate(0.03deg);transform-origin:0 7px;">0.000</span>
<span class="t " id="t43" style="font-size:8.8px;color:#0a0a14;top:280px;letter-spacing:-0.005px;left:616px;transform:translate(0.00px,0.50px) rotate(0.03deg);transform-origin:0 7px;">0.150</span>
<span class="t " id="t44" style="font-size:8.8px;color:#0a0a14;top:280px;letter-spacing:0.067px;left:735px;transform:translate(0.30px,0.50px) rotate(0.03deg);transform-origin:0 7px;">0.300 (m)</span>
<span class="t " id="t45" style="font-size:8.8px;color:#0a0a14;top:298px;letter-spacing:-0.105px;left:556px;transform:translate(0.60px,0.40px) rotate(0.03deg);transform-origin:0 7px;">0.075</span>
<span class="t " id="t46" style="font-size:8.8px;color:#0a0a14;top:298px;letter-spacing:-0.005px;left:675px;transform:translate(0.60px,0.40px) rotate(0.03deg);transform-origin:0 7px;">0.225</span>
<span class="t " id="t47" style="font-size:9.6px;color:#1a1a1a;top:340px;font-weight:700;letter-spacing:-0.950px;left:14px;transform:translate(0.00px,0.74px) rotate(0.03deg);transform-origin:0 8px;">Scope</span>
<span class="t " id="t48" style="font-size:9.6px;color:#1a1a1a;top:355px;letter-spacing:-0.065px;left:14px;transform:translate(0.00px,0.21px) rotate(0.03deg);transform-origin:0 8px;">Scoping Method</span>
<span class="t " id="t49" style="font-size:9.6px;color:#1a1a1a;top:355px;letter-spacing:-0.309px;left:116px;transform:translate(0.00px,0.21px) rotate(0.03deg);transform-origin:0 8px;">Geometry Selection</span>
<span class="t " id="t50" style="font-size:9.6px;color:#1a1a1a;top:369px;letter-spacing:-0.447px;left:14px;transform:translate(0.00px,0.68px) rotate(0.03deg);transform-origin:0 8px;">Geometry</span>
<span class="t " id="t51" style="font-size:9.6px;color:#1a1a1a;top:369px;letter-spacing:-0.297px;left:116px;transform:translate(0.00px,0.68px) rotate(0.03deg);transform-origin:0 8px;">All Bodies</span>
<span class="t " id="t52" style="font-size:9.6px;color:#1a1a1a;top:384px;font-weight:700;letter-spacing:-0.304px;left:14px;transform:translate(0.00px,0.15px) rotate(0.03deg);transform-origin:0 8px;">Definition</span>
<span class="t " id="t53" style="font-size:9.6px;color:#1a1a1a;top:398px;letter-spacing:-0.606px;left:14px;transform:translate(0.00px,0.62px) rotate(0.03deg);transform-origin:0 8px;">Type</span>
<span class="t " id="t54" style="font-size:9.6px;color:#1a1a1a;top:398px;letter-spacing:-0.319px;left:116px;transform:translate(0.00px,0.62px) rotate(0.03deg);transform-origin:0 8px;">Equivalent (von-Mises) Stress</span>
<span class="t " id="t55" style="font-size:9.6px;color:#1a1a1a;top:413px;letter-spacing:-1.000px;left:14px;transform:translate(0.00px,0.09px) rotate(0.03deg);transform-origin:0 8px;">By</span>
<span class="t " id="t56" style="font-size:9.6px;color:#1a1a1a;top:413px;letter-spacing:-0.658px;left:116px;transform:translate(0.00px,0.09px) rotate(0.03deg);transform-origin:0 8px;">Time</span>
<span class="t " id="t57" style="font-size:9.6px;color:#1a1a1a;top:427px;letter-spacing:-0.384px;left:26px;transform:translate(0.80px,0.56px) rotate(0.03deg);transform-origin:0 8px;">Display Time</span>
<span class="t " id="t58" style="font-size:9.6px;color:#1a1a1a;top:427px;letter-spacing:-0.725px;left:116px;transform:translate(0.00px,0.56px) rotate(0.03deg);transform-origin:0 8px;">2. s</span>
<span class="t " id="t59" style="font-size:9.6px;color:#1a1a1a;top:442px;letter-spacing:-0.256px;left:14px;transform:translate(0.00px,0.03px) rotate(0.03deg);transform-origin:0 8px;">Separate Data by Entity</span>
<span class="t " id="t60" style="font-size:9.6px;color:#1a1a1a;top:442px;letter-spacing:-0.871px;left:116px;transform:translate(0.00px,0.03px) rotate(0.03deg);transform-origin:0 8px;">No</span>
<span class="t " id="t61" style="font-size:9.6px;color:#1a1a1a;top:456px;letter-spacing:-0.251px;left:14px;transform:translate(0.00px,0.50px) rotate(0.03deg);transform-origin:0 8px;">Calculate Time History</span>
<span class="t " id="t62" style="font-size:9.6px;color:#1a1a1a;top:456px;letter-spacing:-1.000px;left:116px;transform:translate(0.00px,0.50px) rotate(0.03deg);transform-origin:0 8px;">Yes</span>
<span class="t " id="t63" style="font-size:9.6px;color:#1a1a1a;top:470px;letter-spacing:0.133px;left:14px;transform:translate(0.00px,0.97px) rotate(0.03deg);transform-origin:0 8px;">Identifier</span>
<span class="t " id="t64" style="font-size:9.6px;color:#1a1a1a;top:485px;letter-spacing:-0.356px;left:14px;transform:translate(0.00px,0.44px) rotate(0.03deg);transform-origin:0 8px;">Suppressed</span>
<span class="t " id="t65" style="font-size:9.6px;color:#1a1a1a;top:485px;letter-spacing:-0.871px;left:116px;transform:translate(0.00px,0.44px) rotate(0.03deg);transform-origin:0 8px;">No</span>
<span class="t " id="t66" style="font-size:9.6px;color:#1a1a1a;top:499px;font-weight:700;letter-spacing:-0.410px;left:14px;transform:translate(0.00px,0.91px) rotate(0.03deg);transform-origin:0 8px;">Integration Point Results</span>
<span class="t " id="t67" style="font-size:9.6px;color:#1a1a1a;top:514px;letter-spacing:-0.092px;left:14px;transform:translate(0.00px,0.38px) rotate(0.03deg);transform-origin:0 8px;">Display Option</span>
<span class="t " id="t68" style="font-size:9.6px;color:#1a1a1a;top:514px;letter-spacing:-0.416px;left:116px;transform:translate(0.00px,0.38px) rotate(0.03deg);transform-origin:0 8px;">Averaged</span>
<span class="t " id="t69" style="font-size:9.6px;color:#1a1a1a;top:528px;letter-spacing:-0.416px;left:14px;transform:translate(0.00px,0.84px) rotate(0.03deg);transform-origin:0 8px;">Average Across Bodies</span>
<span class="t " id="t70" style="font-size:9.6px;color:#1a1a1a;top:528px;letter-spacing:-0.871px;left:116px;transform:translate(0.00px,0.84px) rotate(0.03deg);transform-origin:0 8px;">No</span>
<span class="t " id="t71" style="font-size:9.6px;color:#1e1e1e;top:346px;letter-spacing:0.190px;left:386px;transform:translate(0.00px,0.60px) rotate(0.03deg);transform-origin:0 8px;">Animation</span>
<span class="t " id="t72" style="font-size:9.6px;color:#1e1e1e;top:346px;letter-spacing:-0.383px;left:552px;transform:translate(0.20px,0.60px) rotate(0.03deg);transform-origin:0 8px;">20 Frames</span>
<span class="t " id="t73" style="font-size:9.6px;color:#1e1e1e;top:346px;letter-spacing:-0.158px;left:632px;transform:translate(0.70px,0.60px) rotate(0.03deg);transform-origin:0 8px;">2 Sec (Auto)</span>
<span class="t " id="t74" style="font-size:9.0px;color:#222;top:379px;letter-spacing:0.025px;right:362px;transform:translate(0.60px,0.50px) rotate(0.03deg);transform-origin:0 7px;">1.9414e+5</span>
<span class="t " id="t75" style="font-size:9.0px;color:#222;top:396px;letter-spacing:0.243px;right:362px;transform:translate(0.60px,0.01px) rotate(0.03deg);transform-origin:0 7px;">1.5e+5</span>
<span class="t " id="t76" style="font-size:9.0px;color:#222;top:414px;letter-spacing:0.429px;right:362px;transform:translate(0.60px,0.70px) rotate(0.03deg);transform-origin:0 7px;">1.e+5</span>
<span class="t " id="t77" style="font-size:9.0px;color:#222;top:433px;letter-spacing:-0.134px;right:362px;transform:translate(0.60px,0.40px) rotate(0.03deg);transform-origin:0 7px;">50000</span>
<span class="t " id="t78" style="font-size:9.0px;color:#222;top:452px;letter-spacing:0.056px;right:362px;transform:translate(0.60px,0.10px) rotate(0.03deg);transform-origin:0 7px;">3.3936e-3</span>
<span class="t " id="t79" style="font-size:9.0px;color:#222;top:464px;letter-spacing:-1.000px;left:446px;transform:translate(0.90px,0.70px) rotate(0.03deg);transform-origin:0 7px;">0.</span>
<span class="t " id="t80" style="font-size:9.0px;color:#222;top:464px;letter-spacing:-0.345px;left:488px;transform:translate(0.15px,0.70px) rotate(0.03deg);transform-origin:0 7px;">0.25</span>
<span class="t " id="t81" style="font-size:9.0px;color:#222;top:464px;letter-spacing:-0.510px;left:529px;transform:translate(0.40px,0.70px) rotate(0.03deg);transform-origin:0 7px;">0.5</span>
<span class="t " id="t82" style="font-size:9.0px;color:#222;top:464px;letter-spacing:-0.345px;left:570px;transform:translate(0.65px,0.70px) rotate(0.03deg);transform-origin:0 7px;">0.75</span>
<span class="t " id="t83" style="font-size:9.0px;color:#222;top:464px;letter-spacing:-1.000px;left:611px;transform:translate(0.90px,0.70px) rotate(0.03deg);transform-origin:0 7px;">1.</span>
<span class="t " id="t84" style="font-size:9.0px;color:#222;top:464px;letter-spacing:-0.345px;left:653px;transform:translate(0.15px,0.70px) rotate(0.03deg);transform-origin:0 7px;">1.25</span>
<span class="t " id="t85" style="font-size:9.0px;color:#222;top:464px;letter-spacing:-0.510px;left:694px;transform:translate(0.40px,0.70px) rotate(0.03deg);transform-origin:0 7px;">1.5</span>
<span class="t " id="t86" style="font-size:9.0px;color:#222;top:464px;letter-spacing:-0.345px;left:735px;transform:translate(0.65px,0.70px) rotate(0.03deg);transform-origin:0 7px;">1.75</span>
<span class="t " id="t87" style="font-size:9.0px;color:#222;top:464px;letter-spacing:-0.720px;right:23px;transform:translate(0.80px,0.70px) rotate(0.03deg);transform-origin:0 7px;">2.</span>
<span class="t " id="t88" style="font-size:9.2px;color:#111;top:368px;font-weight:700;letter-spacing:-0.277px;right:23px;transform:translate(0.60px,0.20px) rotate(0.03deg);transform-origin:0 7px;">2.</span>
<span class="t " id="t89" style="font-size:9.6px;color:#111;top:483px;font-weight:700;letter-spacing:-0.120px;left:608px;transform:translate(0.20px,0.20px) rotate(0.03deg);transform-origin:0 8px;">[s]</span>
<span class="t " id="t90" style="font-size:9.6px;color:#111;top:418px;font-weight:700;left:391px;transform:translate(0.80px,0.20px) rotate(-90deg);transform-origin:0 8px;">[Pa]</span>
<span class="t " id="t91" style="font-size:9.2px;color:#222;top:501px;left:431px;width:200px;text-align:center;transform:translate(0.30px,0.20px) rotate(0.03deg);transform-origin:0 7px;">1</span>
<span class="t " id="t92" style="font-size:9.2px;color:#222;top:501px;left:596px;width:200px;text-align:center;transform:translate(0.20px,0.20px) rotate(0.03deg);transform-origin:0 7px;">2</span>
<div style="left:0;top:0;width:801px;height:536px;border:1px solid #000;border-bottom-width:1.4px;pointer-events:none;"></div>
</div>
</body></html>
